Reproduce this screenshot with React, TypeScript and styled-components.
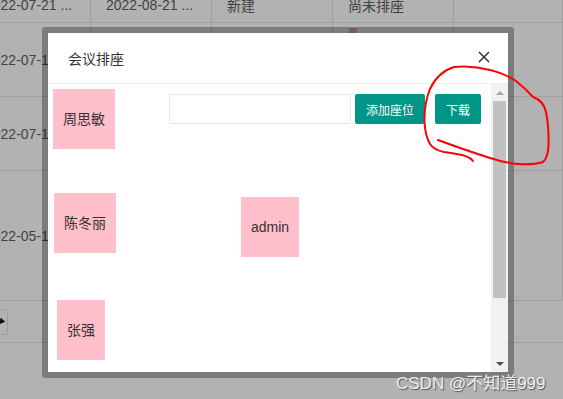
import React from "react";
import styled, { createGlobalStyle } from "styled-components";

const GlobalStyle = createGlobalStyle`
  html, body {
    margin: 0;
    padding: 0;
    background: #fff;
  }
  body {
    font-family: "Liberation Sans", "Noto Sans CJK SC", Arial, sans-serif;
    color: #666;
  }
`;

type Seat = { name: string; x: number; y: number };

const seats: Seat[] = [
  { name: "周思敏", x: 5, y: 5 },
  { name: "陈冬丽", x: 6, y: 109 },
  { name: "admin", x: 193, y: 113 },
  { name: "张强", x: 9, y: 216 },
];

// rows of the list behind the dialog; only what shows past the dialog is filled in
const rows = [
  { h: 36, cells: ["2022-07-21 ...", "2022-08-21 ...", "新建", "尚未排座", ""] },
  { h: 74, cells: ["2022-07-19", "", "", "", ""], tag: true },
  { h: 74, cells: ["2022-07-15", "", "", "", ""] },
  { h: 130, cells: ["2022-05-10", "", "", "", ""] },
];

const App = () => {
  return (
    <Page>
      <GlobalStyle />
      <Table>
        {rows.map((row, i) => (
          <Row key={i} $h={row.h}>
            {row.cells.map((c, j) => (
              <Cell key={j}>
                {row.tag && j === 3 ? <Tag /> : c}
              </Cell>
            ))}
          </Row>
        ))}
        <Pager>
          <PageSelect>
            <Caret />
          </PageSelect>
        </Pager>
      </Table>

      <Shade />

      <Dialog>
        <Header>
          <Title>会议排座</Title>
          <Close>
            <svg width="12" height="12" viewBox="0 0 12 12">
              <path d="M1 1 L11 11 M11 1 L1 11" stroke="#333" strokeWidth="1.5" fill="none" />
            </svg>
          </Close>
        </Header>
        <Body>
          <Canvas>
            <Toolbar>
              <Input />
              <Button>添加座位</Button>
              <Button>下载</Button>
            </Toolbar>
            {seats.map((s) => (
              <SeatBox key={s.name} $x={s.x} $y={s.y}>
                {s.name}
              </SeatBox>
            ))}
          </Canvas>
          <ScrollBar>
            <ArrowBtn>
              <ArrowUp />
            </ArrowBtn>
            <Thumb />
            <TrackRest />
            <ArrowBtn>
              <ArrowDown />
            </ArrowBtn>
          </ScrollBar>
        </Body>
      </Dialog>

      <Mark width="563" height="399" viewBox="0 0 563 399">
        <path
          d="M473 161 Q470 157 462 155 Q452 153 444 152 Q434 150 430 144 Q425 135 424.5 122 Q424 104 430 89 Q438 72 454 67 Q472 65 490 70 Q506 74 516 81 Q526 89 533 97 Q544 101 546 112 Q549 126 548.5 145 Q548 158 543 162 Q533 165 518 164 Q505 163 490 158 Q462 149 438 140"
          stroke="#ff0000"
          strokeWidth="2"
          fill="none"
          strokeLinecap="round"
          strokeLinejoin="round"
        />
      </Mark>

      <Watermark>CSDN @不知道999</Watermark>
    </Page>
  );
};

const Page = styled.div`
  position: relative;
  width: 563px;
  height: 399px;
  overflow: hidden;
  background: #fff;
`;

const Table = styled.div`
  display: flex;
  flex-direction: column;
  margin-top: -13px;
  margin-left: -30px;
  font-size: 14px;
  color: #5f5f5f;
`;

const Row = styled.div<{ $h: number }>`
  display: grid;
  grid-template-columns: 121px 121px 121px 121px 1fr;
  height: ${(p) => p.$h}px;
  box-sizing: border-box;
  border-bottom: 1px solid #e6e6e6;
`;

const Cell = styled.div`
  display: flex;
  align-items: center;
  padding: 0 15px;
  border-right: 1px solid #e6e6e6;
  white-space: nowrap;
  overflow: hidden;
`;

const Tag = styled.span`
  align-self: flex-start;
  margin-top: 5px;
  margin-left: 1px;
  width: 8px;
  height: 14px;
  background: #ffb6c1;
`;

const Pager = styled.div`
  display: flex;
  align-items: center;
  height: 42px;
  box-sizing: border-box;
  border-bottom: 1px solid #e6e6e6;
`;

const PageSelect = styled.div`
  position: relative;
  width: 68px;
  height: 26px;
  margin-left: -30px;
  box-sizing: border-box;
  border: 1px solid #e2e2e2;
  border-radius: 2px;
  background: #fff;
`;

const Caret = styled.i`
  position: absolute;
  right: 3px;
  top: 9px;
  width: 0;
  height: 0;
  border-left: 3px solid transparent;
  border-right: 3px solid transparent;
  border-top: 6px solid #111;
  transform: rotate(40deg);
`;

const Shade = styled.div`
  position: absolute;
  inset: 0;
  background: rgba(0, 0, 0, 0.3);
`;

const Dialog = styled.div`
  position: absolute;
  left: 42px;
  top: 27px;
  width: 472px;
  height: 351px;
  box-sizing: border-box;
  border: 6px solid rgba(0, 0, 0, 0.3);
  border-radius: 3px;
  background: #fff;
  background-clip: padding-box;
  display: flex;
  flex-direction: column;
`;

const Header = styled.div`
  height: 50px;
  flex-shrink: 0;
  border-bottom: 1px solid #eee;
  display: flex;
  align-items: center;
  justify-content: space-between;
  padding: 0 18px 0 20px;
`;

const Title = styled.span`
  font-size: 14px;
  color: #333;
`;

const Close = styled.span`
  display: flex;
  margin-top: -3px;
`;

const Body = styled.div`
  flex: 1;
  display: flex;
  min-height: 0;
`;

const Canvas = styled.div`
  position: relative;
  flex: 1;
  overflow: hidden;
`;

const Toolbar = styled.div`
  display: flex;
  justify-content: flex-end;
  padding: 10px 10px 0 0;
`;

const Input = styled.input`
  width: 182px;
  height: 30px;
  box-sizing: border-box;
  border: 1px solid #e6e6e6;
  border-radius: 2px;
  outline: none;
  margin-right: 4px;
`;

const Button = styled.button`
  height: 30px;
  padding: 0 11px;
  border: none;
  border-radius: 2px;
  background: #009688;
  color: #fff;
  font-size: 12px;
  font-family: "Liberation Sans", "Noto Sans CJK SC", Arial, sans-serif;
  & + & {
    margin-left: 10px;
  }
`;

const SeatBox = styled.div<{ $x: number; $y: number }>`
  position: absolute;
  left: ${(p) => p.$x}px;
  top: ${(p) => p.$y}px;
  height: 60px;
  line-height: 60px;
  padding: 0 10px;
  background: pink;
  color: #333;
  font-size: 14px;
  white-space: nowrap;
`;

const ScrollBar = styled.div`
  width: 17px;
  flex-shrink: 0;
  background: #f1f1f1;
  display: flex;
  flex-direction: column;
`;

const ArrowBtn = styled.div`
  height: 17px;
  display: flex;
  align-items: center;
  justify-content: center;
`;

const ArrowUp = styled.i`
  width: 0;
  height: 0;
  border-left: 4px solid transparent;
  border-right: 4px solid transparent;
  border-bottom: 4px solid #a3a3a3;
`;

const ArrowDown = styled.i`
  width: 0;
  height: 0;
  border-left: 4px solid transparent;
  border-right: 4px solid transparent;
  border-top: 4px solid #505050;
`;

const Thumb = styled.div`
  height: 197px;
  margin: 0 2px;
  background: #c1c1c1;
`;

const TrackRest = styled.div`
  flex: 1;
`;

const Mark = styled.svg`
  position: absolute;
  left: 0;
  top: 0;
  pointer-events: none;
`;

const Watermark = styled.div`
  position: absolute;
  left: 396px;
  top: 369px;
  font-size: 17px;
  color: #eee;
  text-shadow: 1px 1px 1px #555;
  white-space: nowrap;
  font-family: "Liberation Sans", "Noto Sans CJK SC", Arial, sans-serif;
`;

export default App;
